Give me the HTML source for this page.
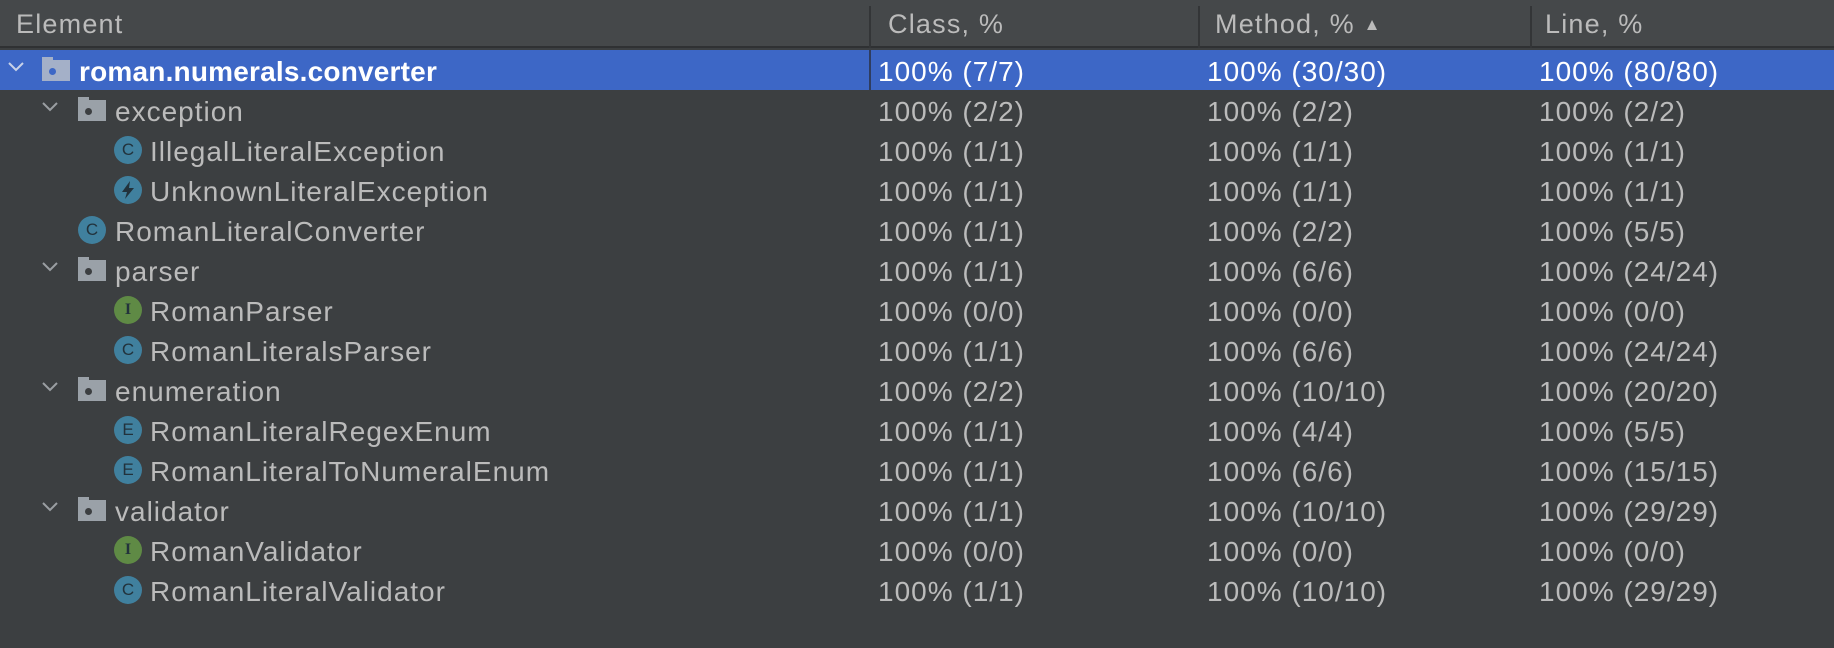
<!DOCTYPE html>
<html><head><meta charset="utf-8"><style>
*{margin:0;padding:0;box-sizing:border-box}
body{width:1834px;height:648px;background:#3c3f41;font-family:"Liberation Sans",sans-serif;color:#bbbbbb;overflow:hidden;position:relative}
.hdr{position:absolute;left:0;top:0;width:1834px;height:48px;background:#45484a;border-bottom:2px solid #2f3133}
.hdr span{position:absolute;top:9px;font-size:27px;color:#bbbbbb;letter-spacing:1.2px}
.sep{position:absolute;top:6px;width:2px;height:42px;background:#333537}
.row{position:absolute;left:0;width:1834px;height:40px;font-size:28px;line-height:40px}
.row.sel{background:#3d67c6;color:#fff}
.row .n,.row .c{position:absolute;top:2px;white-space:nowrap}
.row .n{letter-spacing:1px}
.row.sel .n{font-weight:bold;letter-spacing:0.2px}
.row .c{letter-spacing:1px}
.c1{left:878px}.c2{left:1207px}.c3{left:1539px}
.fold{position:absolute;top:10px;width:28px;height:21px;background:#9aa1a8}
.fold:before{content:"";position:absolute;left:0;top:-3px;width:11px;height:4px;background:#9aa1a8}
.fold:after{content:"";position:absolute;left:7px;top:8px;width:7px;height:7px;border-radius:50%;background:#3c3f41}
.sel .fold{background:#a4b0c8}.sel .fold:before{background:#a4b0c8}.sel .fold:after{background:#3d67c6}
.chev{position:absolute;top:11px;width:18px;height:12px}
.ic{position:absolute;top:6px;width:28px;height:28px;border-radius:50%;background:#40809e;color:#22323c;font-size:17px;line-height:28px;text-align:center;letter-spacing:0}
.ic.g{background:#5f8a45;font-family:"Liberation Serif",serif;font-size:16px;font-weight:bold}
.vsep{position:absolute;left:869px;top:50px;width:2px;height:40px;background:#2f3d60}
</style></head><body>
<div class="hdr">
<span style="left:16px">Element</span>
<div class="sep" style="left:869px"></div><span style="left:888px">Class, %</span>
<div class="sep" style="left:1198px"></div><span style="left:1215px">Method, % <span style="position:static;font-size:17px;vertical-align:3px">&#9650;</span></span>
<div class="sep" style="left:1530px"></div><span style="left:1545px">Line, %</span>
</div>

<div class="row sel" style="top:50px">
<svg class="chev" style="left:7px" viewBox="0 0 18 12"><path d="M2 2 L9 9 L16 2" stroke="#c8d2e8" stroke-width="2" fill="none"/></svg>
<div class="fold" style="left:42px"></div>
<span class="n" style="left:79px">roman.numerals.converter</span>
<span class="c c1">100% (7/7)</span><span class="c c2">100% (30/30)</span><span class="c c3">100% (80/80)</span>
</div>
<div class="vsep"></div>

<div class="row" style="top:90px">
<svg class="chev" style="left:41px" viewBox="0 0 18 12"><path d="M2 2 L9 9 L16 2" stroke="#9a9ea2" stroke-width="2" fill="none"/></svg>
<div class="fold" style="left:78px"></div><span class="n" style="left:115px">exception</span>
<span class="c c1">100% (2/2)</span><span class="c c2">100% (2/2)</span><span class="c c3">100% (2/2)</span></div>

<div class="row" style="top:130px"><div class="ic" style="left:114px">C</div><span class="n" style="left:150px">IllegalLiteralException</span>
<span class="c c1">100% (1/1)</span><span class="c c2">100% (1/1)</span><span class="c c3">100% (1/1)</span></div>

<div class="row" style="top:170px"><div class="ic" style="left:114px"><svg width="28" height="28" viewBox="0 0 28 28"><path d="M16 5 L8 16 L13 16 L11 23 L20 12 L15 12 Z" fill="#22323c"/></svg></div><span class="n" style="left:150px">UnknownLiteralException</span>
<span class="c c1">100% (1/1)</span><span class="c c2">100% (1/1)</span><span class="c c3">100% (1/1)</span></div>

<div class="row" style="top:210px"><div class="ic" style="left:78px">C</div><span class="n" style="left:115px">RomanLiteralConverter</span>
<span class="c c1">100% (1/1)</span><span class="c c2">100% (2/2)</span><span class="c c3">100% (5/5)</span></div>

<div class="row" style="top:250px">
<svg class="chev" style="left:41px" viewBox="0 0 18 12"><path d="M2 2 L9 9 L16 2" stroke="#9a9ea2" stroke-width="2" fill="none"/></svg>
<div class="fold" style="left:78px"></div><span class="n" style="left:115px">parser</span>
<span class="c c1">100% (1/1)</span><span class="c c2">100% (6/6)</span><span class="c c3">100% (24/24)</span></div>

<div class="row" style="top:290px"><div class="ic g" style="left:114px">I</div><span class="n" style="left:150px">RomanParser</span>
<span class="c c1">100% (0/0)</span><span class="c c2">100% (0/0)</span><span class="c c3">100% (0/0)</span></div>

<div class="row" style="top:330px"><div class="ic" style="left:114px">C</div><span class="n" style="left:150px">RomanLiteralsParser</span>
<span class="c c1">100% (1/1)</span><span class="c c2">100% (6/6)</span><span class="c c3">100% (24/24)</span></div>

<div class="row" style="top:370px">
<svg class="chev" style="left:41px" viewBox="0 0 18 12"><path d="M2 2 L9 9 L16 2" stroke="#9a9ea2" stroke-width="2" fill="none"/></svg>
<div class="fold" style="left:78px"></div><span class="n" style="left:115px">enumeration</span>
<span class="c c1">100% (2/2)</span><span class="c c2">100% (10/10)</span><span class="c c3">100% (20/20)</span></div>

<div class="row" style="top:410px"><div class="ic" style="left:114px">E</div><span class="n" style="left:150px">RomanLiteralRegexEnum</span>
<span class="c c1">100% (1/1)</span><span class="c c2">100% (4/4)</span><span class="c c3">100% (5/5)</span></div>

<div class="row" style="top:450px"><div class="ic" style="left:114px">E</div><span class="n" style="left:150px">RomanLiteralToNumeralEnum</span>
<span class="c c1">100% (1/1)</span><span class="c c2">100% (6/6)</span><span class="c c3">100% (15/15)</span></div>

<div class="row" style="top:490px">
<svg class="chev" style="left:41px" viewBox="0 0 18 12"><path d="M2 2 L9 9 L16 2" stroke="#9a9ea2" stroke-width="2" fill="none"/></svg>
<div class="fold" style="left:78px"></div><span class="n" style="left:115px">validator</span>
<span class="c c1">100% (1/1)</span><span class="c c2">100% (10/10)</span><span class="c c3">100% (29/29)</span></div>

<div class="row" style="top:530px"><div class="ic g" style="left:114px">I</div><span class="n" style="left:150px">RomanValidator</span>
<span class="c c1">100% (0/0)</span><span class="c c2">100% (0/0)</span><span class="c c3">100% (0/0)</span></div>

<div class="row" style="top:570px"><div class="ic" style="left:114px">C</div><span class="n" style="left:150px">RomanLiteralValidator</span>
<span class="c c1">100% (1/1)</span><span class="c c2">100% (10/10)</span><span class="c c3">100% (29/29)</span></div>
</body></html>
